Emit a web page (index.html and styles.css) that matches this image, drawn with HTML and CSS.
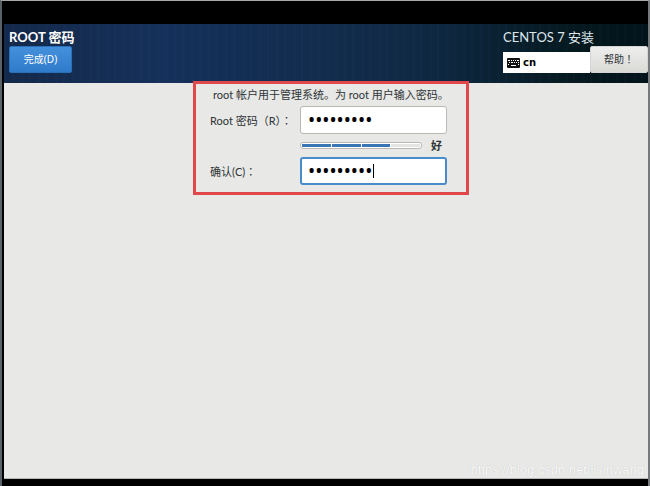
FILE: index.html
```
<!DOCTYPE html>
<html lang="zh-CN">
<head>
  <meta charset="UTF-8">
  <meta name="viewport" content="width=device-width, initial-scale=1.0">
  <title>ROOT 密码</title>
  <link rel="stylesheet" href="styles.css">
</head>
<body>
  <div class="screen">
    <header class="header">
      <div class="header-left">
        <h1 class="title">ROOT 密码</h1>
        <button class="btn btn-done" type="button">完成(D)</button>
      </div>
      <div class="header-right">
        <p class="product">CENTOS 7 安装</p>
        <div class="tools">
          <div class="keyboard">
            <svg width="13" height="10" viewBox="0 0 13 10" aria-hidden="true">
              <rect width="13" height="10" rx="1" fill="#111"/>
              <path d="M1 2.5h2M4 2.5h1M6 2.5h1M8 2.5h1M10 2.5h2M2 4.5h1M4 4.5h2M7 4.5h1M9 4.5h1M11 4.5h1M1 6.5h1M11 6.5h1M4 7.5h5" stroke="#fff" stroke-width="1"/>
            </svg>
            <span>cn</span>
          </div>
          <button class="btn btn-help" type="button">帮助<span class="mark" lang="zh-TW">！</span></button>
        </div>
      </div>
    </header>

    <main class="content">
      <form class="password-form">
        <p class="hint">root 帐户用于管理系统。为 root 用户输入密码。</p>
        <label for="password">Root 密码（R）<span class="mark" lang="zh-TW">：</span></label>
        <input class="field" id="password" type="password" value="centos123" autocomplete="off">
        <div class="strength">
          <div class="strength-bar" role="meter" aria-label="密码强度" aria-valuemin="0" aria-valuemax="4" aria-valuenow="3">
            <span class="segment on"></span>
            <span class="segment on"></span>
            <span class="segment on"></span>
            <span class="segment"></span>
          </div>
          <span class="strength-text">好</span>
        </div>
        <label for="confirm">确认(C)<span class="mark" lang="zh-TW">：</span></label>
        <div class="field-wrap">
          <input class="field field-active" id="confirm" type="password" value="centos123" autocomplete="off">
          <span class="caret"></span>
        </div>
      </form>
      <p class="watermark">https://blog.csdn.net/iisinwang</p>
    </main>
  </div>
</body>
</html>
```
FILE: styles.css
```
* {
  box-sizing: border-box;
}

body {
  margin: 0;
  background-color: #000;
  color: #2e3436;
  font-family: Lato, "Noto Sans CJK SC", sans-serif;
  font-size: 11px;
  line-height: 16px;
}

h1,
p {
  margin: 0;
}

.screen {
  display: flex;
  flex-direction: column;
  min-height: 100vh;
  padding: 23px 0 7px 2px;
  border-top: 1px solid #a5a9ab;
  border-left: 2px solid #586268;
  border-right: 2px solid #777a7c;
}

.header {
  display: flex;
  justify-content: space-between;
  height: 59px;
  padding: 4px 0 0 5px;
  background:
    repeating-linear-gradient(90deg, rgba(60, 110, 170, 0.03) 0 3px, transparent 3px 8px, rgba(60, 110, 170, 0.04) 8px 10px, transparent 10px 17px),
    linear-gradient(90deg, #14294a 0%, #15305a 25%, #122c4d 50%, #0e2740 68%, #05191f 88%, #02131a 100%);
  color: #fff;
}

.title {
  font-size: 13px;
  line-height: 18px;
}

.product {
  color: #dfe6ea;
  font-size: 13px;
  line-height: 18px;
}

.btn {
  height: 27px;
  padding: 0 0 2px;
  border: 1px solid;
  border-radius: 2px;
  font-family: "Noto Sans", "Noto Sans CJK SC", sans-serif;
  font-size: 10px;
}

.btn-done {
  width: 63px;
  border-color: #2a70b8;
  background: linear-gradient(#4590dc, #2f7bcb);
  color: #fff;
}

.btn-help {
  width: 58px;
  border-color: #d5d5d3;
  background: linear-gradient(#eeeeed, #d9d9d6);
  color: #2e3436;
}

.mark {
  font-family: "Noto Sans CJK TC", sans-serif;
}

.tools {
  display: flex;
}

.keyboard {
  display: flex;
  align-items: center;
  gap: 3px;
  width: 87px;
  height: 21px;
  margin-top: 6px;
  padding-left: 4px;
  background-color: #fff;
  color: #000;
  font-family: "DejaVu Sans", sans-serif;
  font-size: 10px;
  font-weight: bold;
}

.content {
  display: flex;
  flex: 1;
  flex-direction: column;
  align-items: center;
  padding-left: 10px;
  border-bottom: 1px solid #b4b8b8;
  background-color: #e8e8e6;
}

.password-form {
  display: grid;
  grid-template-columns: 90px 147px;
  align-items: center;
  margin-top: -2px;
  padding: 3px 19px 7px 14px;
  border: 3px solid #e0484c;
}

.hint {
  grid-column: 1 / -1;
  margin-bottom: 3px;
  padding-left: 3px;
  white-space: nowrap;
}

.field {
  display: block;
  width: 100%;
  height: 28px;
  padding: 0 7px;
  border: 1px solid #b8b8b5;
  border-radius: 3px;
  outline: none;
  background-color: #fff;
  color: #000;
  font-family: "Noto Sans", sans-serif;
  font-size: 19px;
}

.field-active {
  border: 2px solid #4a8bcb;
  padding: 0 6px;
}

.field-wrap {
  position: relative;
}

.caret {
  position: absolute;
  top: 7px;
  left: 73px;
  width: 1px;
  height: 14px;
  background-color: #000;
}

.strength {
  display: flex;
  grid-column: 2;
  align-items: center;
  gap: 9px;
  height: 23px;
}

.strength-bar {
  display: flex;
  flex: 1;
  gap: 1px;
  height: 7px;
  padding: 1px;
  border: 1px solid #b8b8b5;
  border-radius: 3px;
  background-color: #fff;
}

.segment {
  flex: 1;
  background-color: #e4e4e2;
}

.segment.on {
  background-color: #3a76b5;
}

.strength-text {
  margin-right: 5px;
  font-weight: bold;
}

.watermark {
  align-self: flex-end;
  margin-top: auto;
  padding-right: 4px;
  color: #fafafa;
  font-family: "Liberation Sans", sans-serif;
  font-size: 13px;
  text-shadow: 0 0 1px #bbb;
}
```
